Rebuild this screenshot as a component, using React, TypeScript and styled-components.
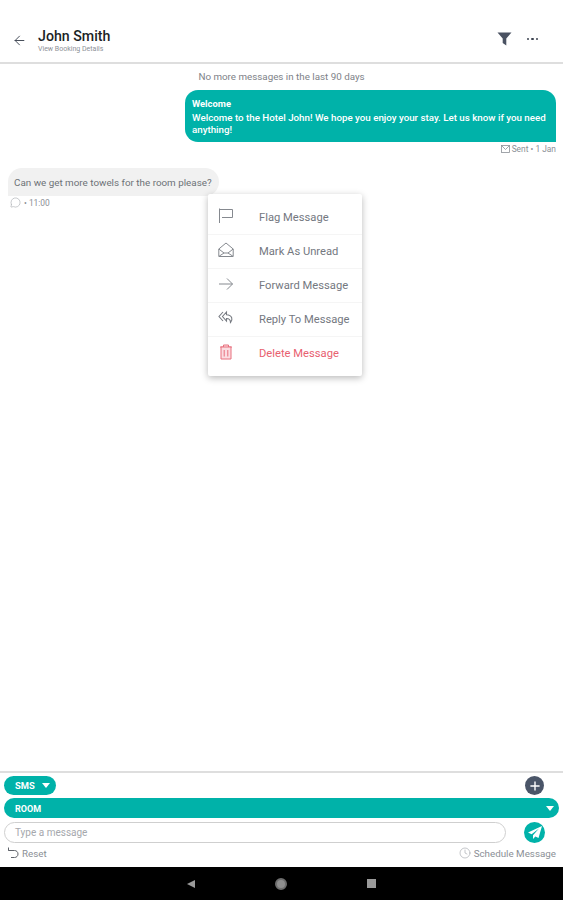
import styled, { createGlobalStyle } from 'styled-components';
import { ArrowLeft, Clock, MessageCircle, Plus } from 'lucide-react';

const GlobalStyle = createGlobalStyle`
  html, body {
    margin: 0;
    padding: 0;
    background: #fff;
  }
  * {
    box-sizing: border-box;
  }
`;

const FlagIcon = () => (
  <svg width="16" height="16" viewBox="0 0 16 16" fill="none" stroke="#85898f" strokeWidth="1">
    <path d="M1.5 0.5V15" />
    <path d="M1.5 1.5H14.5V9.5H4" />
  </svg>
);

const EnvelopeIcon = () => (
  <svg width="16" height="16" viewBox="0 0 16 16" fill="none" stroke="#85898f" strokeWidth="1">
    <path d="M0.8 7L8 1L15.2 7V14.5H0.8Z" />
    <path d="M0.8 7L6 11H10L15.2 7" />
    <path d="M1 14.3L6 11M15 14.3L10 11" />
  </svg>
);

const ForwardIcon = () => (
  <svg width="16" height="16" viewBox="0 0 16 16" fill="none" stroke="#85898f" strokeWidth="1">
    <path d="M1 8H14.5" />
    <path d="M9 2.5L14.5 8L9 13.5" />
  </svg>
);

const ReplyIcon = () => (
  <svg width="16" height="16" viewBox="0 0 16 16" fill="none" stroke="#777b82" strokeWidth="1.1">
    <path d="M5 2L1 6.5L5 11" />
    <path d="M8.5 2L4.5 6.5L8.5 11V8.5C11 8.5 12.5 9.5 12.5 12.5C15 10 14.5 5 8.5 4.8Z" />
  </svg>
);

const TrashIcon = () => (
  <svg width="16" height="16" viewBox="0 0 16 16" fill="#fbdde1" stroke="#e8707e" strokeWidth="1">
    <path d="M2 3H14" />
    <path d="M5.5 3V1H10.5V3" />
    <path d="M3 3V15H13V3Z" />
    <path d="M6.2 6V12.5M9.8 6V12.5" />
  </svg>
);

const menuItems = [
  { label: 'Flag Message', icon: <FlagIcon /> },
  { label: 'Mark As Unread', icon: <EnvelopeIcon /> },
  { label: 'Forward Message', icon: <ForwardIcon /> },
  { label: 'Reply To Message', icon: <ReplyIcon /> },
  { label: 'Delete Message', icon: <TrashIcon />, danger: true },
];

export default function App() {
  return (
    <>
      <GlobalStyle />
      <Screen>
        <Header>
          <BackButton>
            <ArrowLeft size={15} strokeWidth={1.5} />
          </BackButton>
          <Titles>
            <Name>John Smith</Name>
            <SubTitle>View Booking Details</SubTitle>
          </Titles>
          <HeaderActions>
            <svg width="15" height="14" viewBox="0 0 15 14">
              <path d="M0.5 0.5H14.5L9.3 6.5V13.5L5.7 11V6.5Z" fill="#4a5262" />
            </svg>
            <Dots>
              <Dot />
              <Dot />
              <Dot />
            </Dots>
          </HeaderActions>
        </Header>

        <Messages>
          <NoMore>No more messages in the last 90 days</NoMore>
          <OutBubble>
            <strong>Welcome</strong>
            <span>Welcome to the Hotel John! We hope you enjoy your stay. Let us know if you need anything!</span>
          </OutBubble>
          <OutMeta>
            <svg width="9" height="8" viewBox="0 0 9 8" fill="none" stroke="#8b8f96" strokeWidth="0.8">
              <rect x="0.5" y="0.5" width="8" height="7" />
              <path d="M0.5 0.5L4.5 4.5L8.5 0.5" />
            </svg>
            Sent • 1 Jan
          </OutMeta>
          <InBubble>Can we get more towels for the room please?</InBubble>
          <InMeta>
            <MessageCircle size={11} strokeWidth={1} />
            <span>• 11:00</span>
          </InMeta>
        </Messages>

        <Menu>
          {menuItems.map((item) => (
            <MenuRow key={item.label} $danger={item.danger}>
              <MenuIcon>{item.icon}</MenuIcon>
              {item.label}
            </MenuRow>
          ))}
        </Menu>

        <Composer>
          <ChannelRow>
            <SmsPill>
              SMS
              <Caret />
            </SmsPill>
            <AddButton>
              <Plus size={14} strokeWidth={2.4} />
            </AddButton>
          </ChannelRow>
          <RoomPill>
            ROOM
            <SmallCaret />
          </RoomPill>
          <InputRow>
            <MessageInput>Type a message</MessageInput>
            <SendButton>
              <svg width="14" height="13" viewBox="0 0 14 13">
                <path d="M14 0L0 6.5L3.6 8.3L11 2.5L5 9.2V13L7.4 10.4L10.5 12Z" fill="#fff" />
              </svg>
            </SendButton>
          </InputRow>
          <ActionsRow>
            <TextAction>
              <svg width="12" height="12" viewBox="0 0 12 12" fill="none" stroke="#5f636a" strokeWidth="1">
                <path d="M1.5 0.5V3.5H4.5" />
                <path d="M1.5 3.5H7.5C9.5 3.5 11 5 11 7C11 9 9.5 10.5 7.5 10.5H4" />
              </svg>
              Reset
            </TextAction>
            <TextAction>
              <Clock size={12} strokeWidth={1} />
              Schedule Message
            </TextAction>
          </ActionsRow>
        </Composer>

        <NavBar>
          <NavBack />
          <NavHome />
          <NavRecent />
        </NavBar>
      </Screen>
    </>
  );
}

const Screen = styled.div`
  position: relative;
  width: 563px;
  height: 900px;
  display: flex;
  flex-direction: column;
  overflow: hidden;
  background: #fff;
  font-family: Roboto, 'Liberation Sans', sans-serif;
`;

const Header = styled.header`
  height: 64px;
  flex: none;
  display: flex;
  align-items: center;
  padding: 16px 25px 0 12px;
  border-bottom: 2px solid #dedede;
`;

const BackButton = styled.div`
  width: 26px;
  display: flex;
  margin-top: 2px;
  color: #3c4350;
`;

const Titles = styled.div`
  display: flex;
  flex-direction: column;
  margin-top: 4px;
`;

const Name = styled.div`
  font-size: 14.2px;
  line-height: 15px;
  font-weight: 500;
  color: #1c1f26;
`;

const SubTitle = styled.div`
  font-size: 7px;
  line-height: 10px;
  color: #8d9197;
`;

const HeaderActions = styled.div`
  margin-left: auto;
  display: flex;
  align-items: center;
  gap: 15px;
`;

const Dots = styled.div`
  display: flex;
  gap: 2px;
`;

const Dot = styled.span`
  width: 2.5px;
  height: 2.5px;
  border-radius: 50%;
  background: #3c4350;
`;

const Messages = styled.main`
  flex: 1;
  display: flex;
  flex-direction: column;
  padding: 6px 7px 0 8px;
`;

const NoMore = styled.div`
  align-self: center;
  margin-right: 1px;
  font-size: 9.8px;
  line-height: 14px;
  color: #7e8288;
`;

const OutBubble = styled.div`
  align-self: flex-end;
  width: 371px;
  height: 52px;
  margin-top: 6px;
  padding: 8px 8px 0 7px;
  display: flex;
  flex-direction: column;
  background: #00b2a9;
  border-radius: 13px 13px 0 13px;
  color: #fff;
  font-size: 9.75px;
  line-height: 12px;
  font-weight: 500;

  strong {
    font-weight: 700;
    font-size: 9.4px;
    line-height: 12px;
    margin-bottom: 2px;
  }
`;

const OutMeta = styled.div`
  align-self: flex-end;
  display: flex;
  align-items: center;
  gap: 2px;
  height: 14px;
  font-size: 8.4px;
  color: #8b8f96;
`;

const InBubble = styled.div`
  align-self: flex-start;
  width: 211px;
  height: 28px;
  margin-top: 12px;
  padding: 0 6px;
  display: flex;
  align-items: center;
  background: #f1f1f1;
  border-radius: 14px 14px 14px 0;
  font-size: 9.85px;
  color: #6d7177;
  white-space: nowrap;
`;

const InMeta = styled.div`
  display: flex;
  align-items: center;
  gap: 3px;
  height: 13px;
  padding-left: 2px;
  font-size: 8.4px;
  color: #8b8f96;
`;

const Menu = styled.div`
  position: absolute;
  left: 208px;
  top: 194px;
  width: 154px;
  height: 182px;
  padding-top: 7px;
  background: #fff;
  border-radius: 2px;
  box-shadow: 0 2px 7px rgba(0, 0, 0, 0.28);
`;

const MenuRow = styled.div<{ $danger?: boolean }>`
  height: 34px;
  display: flex;
  align-items: center;
  padding-left: 10px;
  font-size: 11.2px;
  color: ${(p) => (p.$danger ? '#e8606f' : '#74787f')};
  border-bottom: 1px solid ${(p) => (p.$danger ? 'transparent' : '#f5f5f5')};
`;

const MenuIcon = styled.span`
  width: 41px;
  display: flex;
  margin-top: -3px;
`;

const Composer = styled.section`
  height: 96px;
  flex: none;
  display: flex;
  flex-direction: column;
  padding: 3px 4px 0;
  border-top: 2px solid #dedede;
`;

const ChannelRow = styled.div`
  height: 19px;
  display: flex;
  align-items: center;
  justify-content: space-between;
  padding-right: 15px;
`;

const SmsPill = styled.div`
  width: 52px;
  height: 19px;
  display: flex;
  align-items: center;
  gap: 7px;
  padding-left: 11px;
  border-radius: 10px;
  background: #00b2a9;
  color: #fff;
  font-size: 9.4px;
  font-weight: 700;
`;

const Caret = styled.span`
  width: 0;
  height: 0;
  border-left: 4px solid transparent;
  border-right: 4px solid transparent;
  border-top: 5px solid #fff;
`;

const SmallCaret = styled(Caret)`
  margin-left: auto;
  margin-right: 1px;
`;

const AddButton = styled.div`
  width: 19px;
  height: 19px;
  display: flex;
  align-items: center;
  justify-content: center;
  border-radius: 50%;
  background: #4a5568;
  color: #fff;
`;

const RoomPill = styled.div`
  height: 20px;
  margin-top: 3px;
  display: flex;
  align-items: center;
  padding: 1px 4px 0 11px;
  border-radius: 10px;
  background: #00b2a9;
  color: #fff;
  font-size: 9px;
  font-weight: 700;
`;

const InputRow = styled.div`
  display: flex;
  align-items: center;
  gap: 18px;
  margin-top: 4px;
  padding-right: 14px;
`;

const MessageInput = styled.div`
  flex: 1;
  height: 21px;
  display: flex;
  align-items: center;
  padding-left: 10px;
  border: 1px solid #cfcfcf;
  border-radius: 11px;
  font-size: 10px;
  color: #a5a8ad;
`;

const SendButton = styled.div`
  width: 21px;
  height: 21px;
  display: flex;
  align-items: center;
  justify-content: center;
  border-radius: 50%;
  background: #00b2a9;
`;

const ActionsRow = styled.div`
  display: flex;
  justify-content: space-between;
  align-items: center;
  height: 18px;
  margin-top: 1px;
  padding: 0 3px;
`;

const TextAction = styled.div`
  display: flex;
  align-items: center;
  gap: 3px;
  font-size: 9.8px;
  color: #8b8f96;
`;

const NavBar = styled.nav`
  height: 33px;
  flex: none;
  display: flex;
  align-items: center;
  justify-content: center;
  gap: 80px;
  margin-top: auto;
  background: #000;
`;

const NavBack = styled.span`
  width: 0;
  height: 0;
  border-top: 4.5px solid transparent;
  border-bottom: 4.5px solid transparent;
  border-right: 8px solid #9a9a9a;
`;

const NavHome = styled.span`
  width: 12px;
  height: 12px;
  border-radius: 50%;
  background: #8f8f8f;
  border: 2px solid #6e6e6e;
`;

const NavRecent = styled.span`
  width: 9px;
  height: 9px;
  background: #9a9a9a;
`;
